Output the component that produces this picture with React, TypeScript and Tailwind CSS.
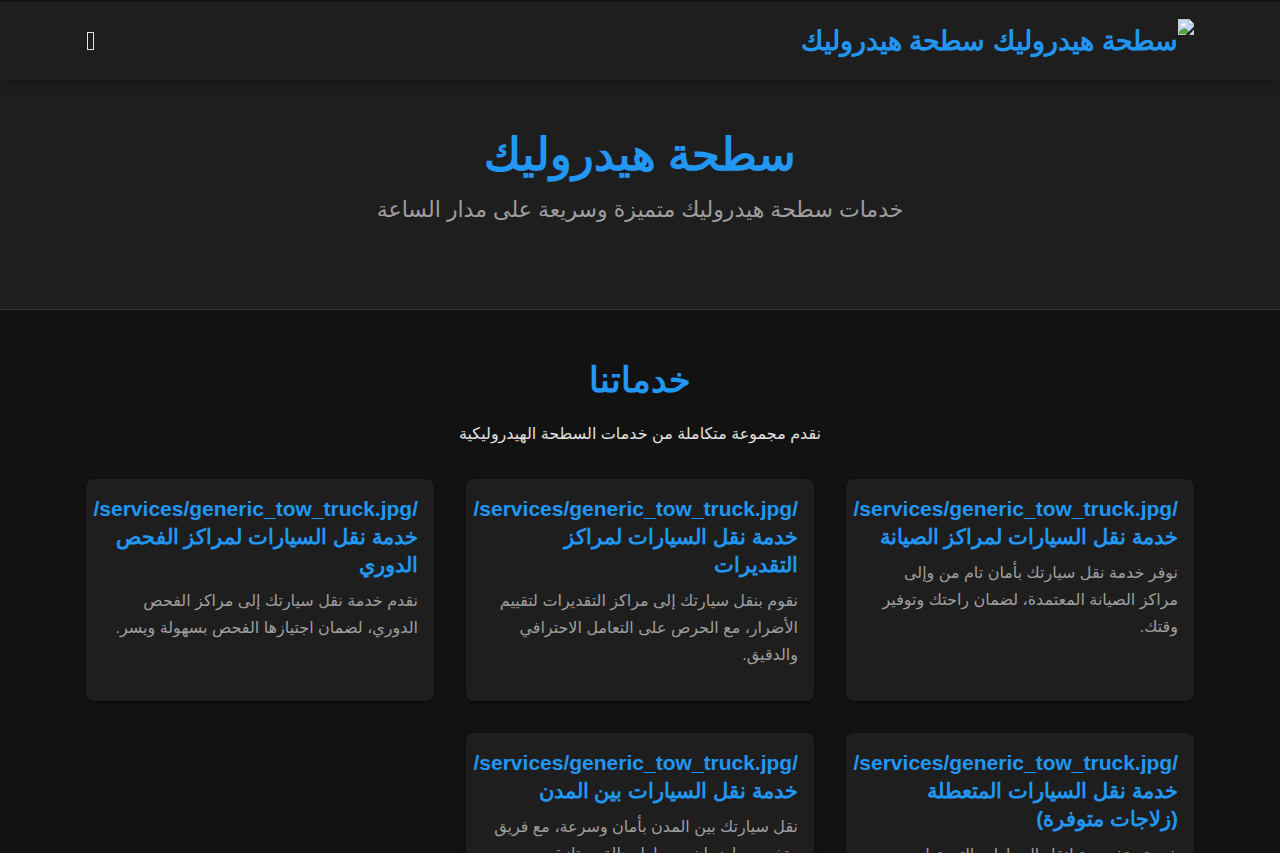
import React from 'react';

interface Service {
  id: number;
  icon: string;
  title: string;
  description: string;
}

const SITE_NAME = 'سطحة هيدروليك';
const DEFAULT_ICON = '/services/generic_tow_truck.jpg/';

const services: Service[] = [
  {
    id: 1,
    icon: DEFAULT_ICON,
    title: 'خدمة نقل السيارات لمراكز الصيانة',
    description: 'نوفر خدمة نقل سيارتك بأمان تام من وإلى مراكز الصيانة المعتمدة، لضمان راحتك وتوفير وقتك.',
  },
  {
    id: 2,
    icon: DEFAULT_ICON,
    title: 'خدمة نقل السيارات لمراكز التقديرات',
    description: 'نقوم بنقل سيارتك إلى مراكز التقديرات لتقييم الأضرار، مع الحرص على التعامل الاحترافي والدقيق.',
  },
  {
    id: 3,
    icon: DEFAULT_ICON,
    title: 'خدمة نقل السيارات لمراكز الفحص الدوري',
    description: 'نقدم خدمة نقل سيارتك إلى مراكز الفحص الدوري، لضمان اجتيازها الفحص بسهولة ويسر.',
  },
  {
    id: 4,
    icon: DEFAULT_ICON,
    title: 'خدمة نقل السيارات المتعطلة (زلاجات متوفرة)',
    description: 'خدمة متخصصة لنقل السيارات التي تواجه أعطالاً.',
  },
  {
    id: 5,
    icon: DEFAULT_ICON,
    title: 'خدمة نقل السيارات بين المدن',
    description: 'نقل سيارتك بين المدن بأمان وسرعة، مع فريق متخصص لضمان وصولها بحالة ممتازة.',
  },
];

function LogoImage() {
  return (
    <svg className="h-4 w-4 shrink-0 self-start" viewBox="0 0 16 16" aria-hidden="true">
      <path d="M0 0h11l5 5v11H0z" fill="#c5c5c5" />
      <path d="M1 1h9.500v4.500H15V15H1z" fill="#c6d7f5" />
      <path d="M3 6.500c0-1 .8-1.500 1.600-1.300C5 4 7 4 7.300 5.300c1 0 1.500 1.700.2 1.700H3.600C3.200 7 3 6.800 3 6.500z" fill="#fff" />
      <path d="M1 15v-2c2-3 5-5 8-3l3 5z" fill="#5aa246" />
      <path d="M11 0v5h5z" fill="#f4f4f4" stroke="#9a9a9a" strokeWidth=".6" />
      <path d="M16 7.500v3L11 16H7.500z" fill="#1e1e1e" />
    </svg>
  );
}

function Header() {
  return (
    <header className="relative z-10 border-t-2 border-[#121212] bg-[#1e1e1e] shadow-[0_2px_10px_rgba(0,0,0,0.3)]">
      <div className="mx-auto flex h-[78px] max-w-[1140px] items-center justify-between px-4">
        <a href="#" className="flex items-center text-[27px] leading-[44px] font-bold text-[#2196f3]">
          <LogoImage />
          <span>{SITE_NAME}</span>
          <span className="ms-2">{SITE_NAME}</span>
        </a>
        <button type="button" aria-label="القائمة" className="flex h-10 items-center px-px">
          <span className="h-[18px] w-[7px] border border-[#e0e0e0]" />
        </button>
      </div>
    </header>
  );
}

function ServiceCard({ service }: { service: Service }) {
  return (
    <article className="overflow-hidden rounded-lg bg-[#1e1e1e] px-4 pt-4 pb-[33px] shadow-[0_2px_5px_rgba(0,0,0,0.3)]">
      <h3 className="mb-2 text-[21px] leading-7 font-bold text-[#2196f3]">
        <span className="block whitespace-nowrap">{service.icon}</span>
        {service.title}
      </h3>
      <p className="font-['Liberation_Sans','DejaVu_Sans',sans-serif] text-base leading-[27px] text-[#9e9e9e]">
        {service.description}
      </p>
    </article>
  );
}

export default function App() {
  return (
    <div
      dir="rtl"
      lang="ar"
      className="min-h-screen bg-[#121212] font-['Liberation_Sans',sans-serif] text-[#e0e0e0]"
    >
      <Header />

      <section className="border-b border-[#333333] bg-[#1e1e1e] px-4 pt-12 pb-20 text-center">
        <h1 className="text-[45px] leading-[54px] font-bold text-[#2196f3]">{SITE_NAME}</h1>
        <p className="mt-2 font-['Liberation_Sans','DejaVu_Sans',sans-serif] text-[22px] leading-[39px] text-[#9e9e9e]">
          خدمات سطحة هيدروليك متميزة وسريعة على مدار الساعة
        </p>
      </section>

      <main className="mx-auto max-w-[1140px] px-4 py-12">
        <div className="mb-8 text-center">
          <h2 className="mb-[18px] text-[35px] leading-[44px] font-bold text-[#2196f3]">خدماتنا</h2>
          <p className="font-['Liberation_Sans','DejaVu_Sans',sans-serif] text-base leading-[27px]">
            نقدم مجموعة متكاملة من خدمات السطحة الهيدروليكية
          </p>
        </div>
        <div className="grid grid-cols-1 gap-8 sm:grid-cols-2 lg:grid-cols-3">
          {services.map((service) => (
            <ServiceCard key={service.id} service={service} />
          ))}
        </div>
      </main>
    </div>
  );
}
